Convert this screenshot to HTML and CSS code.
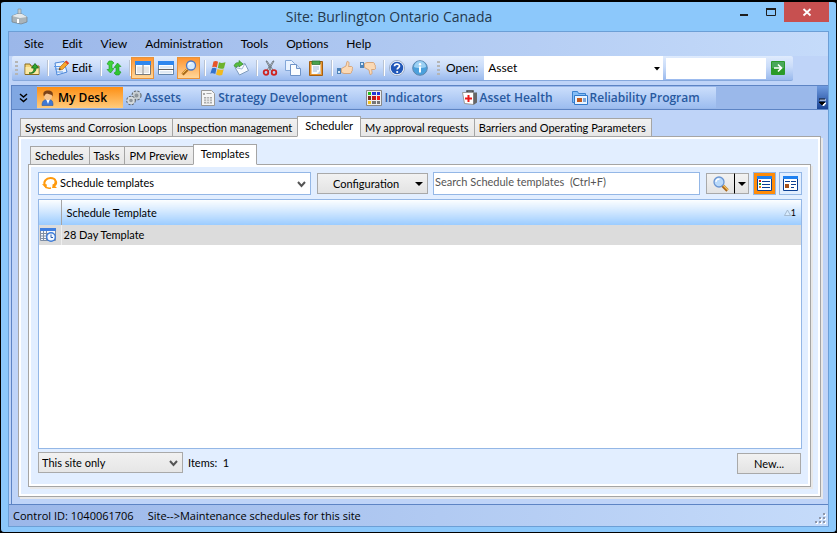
FILE: index.html
```html
<!DOCTYPE html>
<html lang="en">
<head>
<meta charset="utf-8">
<title>Site: Burlington Ontario Canada</title>
<link rel="stylesheet" href="styles.css">
</head>
<body>
<div class="window">
  <header class="titlebar">
    <svg class="app-icon" width="18" height="18" viewBox="0 0 18 18"><path d="M8 1h3v7H8z" fill="#c4cdd2" stroke="#7f8a90" stroke-width=".6"/><path d="M2 8l5-2h5l5 3v5l-6 2-9-2z" fill="#aab4b9" stroke="#758087" stroke-width=".7"/><path d="M2 8l5-2h5l5 3-7 1z" fill="#e4e9eb"/><path d="M7 11h2v4H7z" fill="#fff"/></svg>
    <h1 class="title">Site: Burlington Ontario Canada</h1>
    <div class="window-buttons">
      <button class="winbtn" aria-label="Minimize"><svg width="12" height="12" viewBox="0 0 12 12"><path d="M2 8h8v2H2z" fill="#1e1e1e"/></svg></button>
      <button class="winbtn" aria-label="Maximize"><svg width="12" height="12" viewBox="0 0 12 12"><path d="M1.500 2.500h9v7h-9z" fill="none" stroke="#1e1e1e"/><path d="M1 2h10v2H1z" fill="#1e1e1e"/></svg></button>
      <button class="winbtn close" aria-label="Close"><svg width="12" height="12" viewBox="0 0 12 12"><path d="M2.500 3l7 6.500M9.500 3l-7 6.500" stroke="#fff" stroke-width="1.800"/></svg></button>
    </div>
  </header>

  <div class="client">
    <nav class="menu" aria-label="Main menu">
      <button>Site</button><button>Edit</button><button>View</button><button>Administration</button><button>Tools</button><button>Options</button><button>Help</button>
    </nav>

    <div class="toolbar-row">
      <div class="toolbar">
        <span class="grip"></span>
        <button class="tool" aria-label="Up one level"><svg width="16" height="16" viewBox="0 0 16 16"><path d="M1 4h5l1 2h8v8.500H1z" fill="#f3d477" stroke="#8a6a1c"/><path d="M1.500 7h13v7h-13z" fill="#fbe9a6"/><path d="M5 13c4 0 5-2 5-5H7.500L11 3.500 14.500 8H12c0 4-3 6-7 5z" fill="#2fa52f" stroke="#136313" stroke-width=".8"/></svg></button>
        <span class="sep"></span>
        <button class="tool wide"><svg width="16" height="16" viewBox="0 0 16 16"><path d="M2 3l9-1.500 3 10.500-10 3z" fill="#e9f3ff" stroke="#4c86d8"/><path d="M1 6.500h6M2 9h6M3 12h7" stroke="#5b98e6"/><path d="M6 10l1-3 6-6 2.500 2.500-6 6z" fill="#f6a72c" stroke="#b86a10" stroke-width=".7"/><path d="M12 2l1.500-1.500 2.500 2.500L14.500 4.500z" fill="#e2402c"/><path d="M6 10l.7-2 1.300 1.300z" fill="#333"/></svg>Edit</button>
        <span class="sep"></span>
        <button class="tool" aria-label="Refresh"><svg width="16" height="16" viewBox="0 0 16 16"><path d="M1 4l2-3h3l2 2-2 1.500v4H8L4.500 13 1 9.500h2V5z" fill="#3fd43a" stroke="#1c9422" stroke-width=".6"/><path d="M15 12l-2 3h-3l-2-2 2-1.500v-4H8L11.500 3 15 6.500h-2V11z" fill="#2fc62f" stroke="#1c9422" stroke-width=".6"/></svg></button>
        <span class="sep"></span>
        <button class="tool on" aria-label="Split columns"><svg width="16" height="16" viewBox="0 0 16 16"><path d="M.5 1.500h15v13H.5z" fill="#fff" stroke="#777"/><path d="M0 1h16v4H0z" fill="#2f87ee"/><path d="M2 6.500h5v6.500H2zM9 6.500h5v6.500H9z" fill="#e6e6e6"/><path d="M8 5v9" stroke="#777"/></svg></button>
        <button class="tool" aria-label="Split rows"><svg width="16" height="16" viewBox="0 0 16 16"><path d="M.5 1.500h15v13H.5z" fill="#fff" stroke="#6285ad"/><path d="M0 1h16v4H0z" fill="#2f87ee"/><path d="M2 6h12v2.500H2zM2 11h12v2.500H2z" fill="#dfe9f4"/><path d="M0 9.500h16" stroke="#666"/></svg></button>
        <button class="tool on" aria-label="Find"><svg width="16" height="16" viewBox="0 0 16 16"><path d="M1.500 14.500l5-5" stroke="#a86a1b" stroke-width="3"/><path d="M1.500 13.500l5-5" stroke="#f4bf57"/><circle cx="10" cy="5.500" r="4.500" fill="#d5eaff" stroke="#4c78c4" stroke-width="1.300"/><path d="M7.500 5c.3-1.500 1.500-2.200 3-2" stroke="#fff" stroke-width="1.300" fill="none"/></svg></button>
        <span class="sep"></span>
        <button class="tool" aria-label="Windows"><svg width="16" height="16" viewBox="0 0 16 16"><path d="M3.500 1.500c2-1 3.500-.5 4.500.3L6.800 7.500c-1.800-1-3.300-1-4.600-.3z" fill="#e6552a"/><path d="M9 2.200c2 1 3.500.8 6.500 0l-1.500 6c-2 .8-3.800.6-6.200-.3z" fill="#6eb32c"/><path d="M2 8.300c1.500-.8 3-.7 4.500.2L5.300 14c-1.600-.8-3.200-.9-5-.2z" fill="#3472cc"/><path d="M7.500 9c2 1 3.900 1 6.200.2L12.200 15c-2 .8-3.900.5-6.200-.4z" fill="#f1b920"/></svg></button>
        <button class="tool" aria-label="Send"><svg width="16" height="16" viewBox="0 0 16 16"><path d="M2 7.500l10-4 3.500 7-9 4.500z" fill="#f8fbff" stroke="#7f9bbd"/><path d="M2 7.500l7 1.500L12 3.500" fill="none" stroke="#a3b8d2"/><path d="M1 6c1-3 3-4 5-3V.5L10 4 6 7V5.500C5 5 4 6 3.500 7.500z" fill="#58bd3c" stroke="#2d8420" stroke-width=".6"/></svg></button>
        <span class="sep"></span>
        <button class="tool" aria-label="Cut"><svg width="16" height="16" viewBox="0 0 16 16"><path d="M4 1l1 0 6 9-1.500 1zM12 1h-1L5 10l1.500 1z" fill="#dce2e8" stroke="#5d6872" stroke-width=".8"/><circle cx="4" cy="12.500" r="2.300" fill="none" stroke="#cf2421" stroke-width="1.800"/><circle cx="12" cy="12.500" r="2.300" fill="none" stroke="#cf2421" stroke-width="1.800"/></svg></button>
        <button class="tool" aria-label="Copy"><svg width="16" height="16" viewBox="0 0 16 16"><path d="M.5.500h6l3 3v7h-9z" fill="#eaf3ff" stroke="#83a7d8"/><path d="M5.500 4.500h6l4 4v7h-10z" fill="#fbfdff" stroke="#6e93c8"/><path d="M11.500 4.500v4h4" fill="#cfe1f8" stroke="#6e93c8"/></svg></button>
        <button class="tool" aria-label="Paste"><svg width="16" height="16" viewBox="0 0 16 16"><path d="M1.500 1.500h13v14h-13z" fill="#e99630" stroke="#a55f13"/><path d="M3.500 4h9v10h-9z" fill="#f7fbff"/><path d="M4 1h8v3.500H4z" fill="#48a14c" stroke="#266b2b" stroke-width=".7"/><path d="M5 7h6M5 9h6M5 11h4" stroke="#9fb9d9"/><path d="M9 14l3.500-3.500V14z" fill="#bcd0e8"/></svg></button>
        <span class="sep"></span>
        <button class="tool" aria-label="Approve"><svg width="16" height="16" viewBox="0 0 16 16"><path d="M0 8h4v6H0z" fill="#4e83b8"/><path d="M1 11h2v2H1z" fill="#d7e8f8"/><path d="M4.500 8.500L9 6l1-4.500c2-.5 2.500 1.500 1.500 5h3c1.500.5 1.300 2 .5 2.500.7.800.5 2-.4 2.300.2 1-.3 2-1.600 2.200H7l-2.500-1z" fill="#fbd9b5" stroke="#d39b68" stroke-width=".8"/></svg></button>
        <button class="tool" aria-label="Reject"><svg width="16" height="16" viewBox="0 0 16 16"><path d="M0 2h4v6H0z" fill="#4e83b8"/><path d="M1 3h2v2H1z" fill="#d7e8f8"/><path d="M4.500 7.500L9 10l1 4.500c2 .5 2.500-1.500 1.500-5h3c1.500-.5 1.300-2 .5-2.500.7-.8.5-2-.4-2.300.2-1-.3-2-1.600-2.200H7l-2.500 1z" fill="#fbd9b5" stroke="#d39b68" stroke-width=".8"/></svg></button>
        <span class="sep"></span>
        <button class="tool" aria-label="Help"><svg width="16" height="16" viewBox="0 0 16 16"><circle cx="8" cy="8" r="7" fill="#2157b8" stroke="#eef4fc" stroke-width="1.500"/><circle cx="8" cy="8" r="7.600" fill="none" stroke="#7288aa" stroke-width=".6"/><path d="M5.500 6.300C5.500 3.500 10.500 3.500 10.500 6c0 1.700-2.300 1.800-2.300 3.500" fill="none" stroke="#fff" stroke-width="1.700"/><circle cx="8.200" cy="12" r="1.100" fill="#fff"/></svg></button>
        <button class="tool" aria-label="Information"><svg width="16" height="16" viewBox="0 0 16 16"><circle cx="8" cy="8" r="7.300" fill="#4ba0dc" stroke="#5f87ac"/><path d="M2 7a6 6 0 0 1 12 0c-3 1.500-9 1.500-12 0z" fill="#9bd0f3"/><circle cx="8" cy="4.200" r="1.200" fill="#fff"/><path d="M8 6.500v6" stroke="#fff" stroke-width="2"/></svg></button>
        <span class="grip second"></span>
        <label class="open-label" for="open-type">Open:</label>
        <span class="open-combo">
          <select id="open-type"><option>Asset</option></select>
          <svg class="tri" width="7" height="4" viewBox="0 0 7 4"><path d="M0 0h6L3 3.500z"/></svg>
        </span>
        <input class="open-text" type="text" aria-label="Open item">
        <button class="tool go" aria-label="Go"><svg width="14" height="14" viewBox="0 0 14 14"><rect width="14" height="14" rx="1" fill="#2a9a28"/><path d="M1 1h12v6H1z" fill="#4aa85a"/><path d="M3 7h7M7 3.500L10.500 7 7 10.500" fill="none" stroke="#fff" stroke-width="1.700"/></svg></button>
      </div>
    </div>

    <nav class="navbar" aria-label="Modules">
      <button class="more" aria-label="Collapse"><svg width="9" height="10" viewBox="0 0 9 10"><path d="M1 1l3.500 3L8 1M1 5.500l3.500 3 3.500-3" fill="none" stroke="#000" stroke-width="1.500"/></svg></button>
      <a class="nav-item current" href="#"><svg width="16" height="16" viewBox="0 0 16 16"><path d="M2 15.500C2 11 4 9.500 8 9.500s5 1.500 5 6z" fill="#3f78d4" stroke="#2b56a0" stroke-width=".6"/><path d="M6 9h4l-2 5z" fill="#fff"/><circle cx="8" cy="6" r="4" fill="#f6c592"/><path d="M4 6.500C2 2 5 .5 8 .5s6 1.500 4.500 6C12 4 9 4.500 7 3.500 5 4 5 5 4 6.500z" fill="#7c4217"/></svg>My Desk</a>
      <a class="nav-item" href="#"><svg width="16" height="16" viewBox="0 0 16 16"><circle cx="10.500" cy="5.500" r="3.500" fill="#dfe3e6" stroke="#5c646b" stroke-width="3.200" stroke-dasharray="1.800 1"/><circle cx="10.500" cy="5.500" r="3" fill="#8d959b" stroke="#c8ced2" stroke-width="2"/><circle cx="5" cy="10.500" r="3.300" fill="#dfe3e6" stroke="#5c646b" stroke-width="3" stroke-dasharray="1.700 1"/><circle cx="5" cy="10.500" r="2.800" fill="#8d959b" stroke="#d5dadd" stroke-width="2"/></svg>Assets</a>
      <a class="nav-item" href="#"><svg width="16" height="16" viewBox="0 0 16 16"><path d="M1.500.500h10l3 3v12h-13z" fill="#f6f6f6" stroke="#999"/><path d="M3 3h2v2H3zM4 7h8v6.500H4z" fill="#aaa"/><path d="M4 9h8M4 11.300h8M6.700 7v6.500M9.400 7v6.500" stroke="#eee"/><path d="M6.500 3.500h5" stroke="#aaa"/></svg>Strategy Development</a>
      <a class="nav-item" href="#"><svg width="16" height="16" viewBox="0 0 16 16"><path d="M.5.500h15v15H.5z" fill="#eee" stroke="#888"/><path d="M2 2h3v3H2z" fill="#20c020"/><path d="M6 2h4v3H6zM11 2h3v3h-3z" fill="#2038d8"/><path d="M2 6h3v4H2z" fill="#7c2c20"/><path d="M6 6h4v4H6z" fill="#c01818"/><path d="M11 6h3v4h-3z" fill="#f01818"/><path d="M2 11h3v3H2z" fill="#f0c020"/><path d="M6 11h4v3H6zM11 11h3v3h-3z" fill="#777"/></svg>Indicators</a>
      <a class="nav-item" href="#"><svg width="16" height="16" viewBox="0 0 16 16"><path d="M5 3V1h6v2" fill="none" stroke="#444" stroke-width="1.500"/><path d="M.5 2.500h11v12l-9-1z" fill="#fff" stroke="#999"/><path d="M11.500 2.500h3.500v10l-3.500 2.500z" fill="#666"/><path d="M6.500 5v7M3 8.500h7" stroke="#ec1818" stroke-width="2"/></svg>Asset Health</a>
      <a class="nav-item" href="#"><svg width="16" height="16" viewBox="0 0 16 16"><path d="M.5 12.500v-11h5l1 2h7v9z" fill="#85bdf5" stroke="#3b82d0"/><path d="M2.500 14.500v-9h13v9z" fill="#eaf4ff" stroke="#2f79cc"/><path d="M5 8h5v4H5z" fill="#c25a1e"/><path d="M11 8h3v4h-3z" fill="#7ca6d8"/></svg>Reliability Program</a>
      <button class="overflow" aria-label="More modules"><svg width="7" height="8" viewBox="0 0 7 8"><path d="M1 2h6M2 5h5L4.500 8z" fill="#fff" stroke="#fff"/><path d="M0 1h6M0 4h6L3 7z" stroke="#000" stroke-width=".8"/></svg></button>
    </nav>

    <main class="workspace">
      <div class="tabs" role="tablist">
        <button class="tab" role="tab">Systems and Corrosion Loops</button><button class="tab" role="tab">Inspection management</button><button class="tab active" role="tab" aria-selected="true">Scheduler</button><button class="tab" role="tab">My approval requests</button><button class="tab" role="tab">Barriers and Operating Parameters</button>
      </div>
      <section class="panel outer">
        <div class="tabs" role="tablist">
          <button class="tab" role="tab">Schedules</button><button class="tab" role="tab">Tasks</button><button class="tab" role="tab">PM Preview</button><button class="tab active" role="tab" aria-selected="true">Templates</button>
        </div>
        <section class="panel inner">
          <div class="filters">
            <span class="view-combo">
              <svg class="view-icon" width="16" height="14" viewBox="0 0 16 14"><path d="M3 9.500C1 6 4 2 8.500 2 11 2 13 3 13.500 5" fill="none" stroke="#ff9a0c" stroke-width="2"/><path d="M13.500 5c.8 2-.3 4-2.500 5" fill="none" stroke="#ff9a0c" stroke-width="2.600"/><path d="M3 10c1 2 3.500 2.500 6 2" fill="none" stroke="#ff9a0c" stroke-width="1.600"/><path d="M0 8l5 .5-1 4zM11 8l4 4h-5z" fill="#ff9a0c"/></svg>
              <select aria-label="View"><option>Schedule templates</option></select>
              <svg class="chev" width="9" height="7" viewBox="0 0 9 7"><path d="M1 1l3.500 4L8 1" fill="none" stroke="#555" stroke-width="2"/></svg>
            </span>
            <button class="btn config"><span>Configuration</span><svg width="8" height="4" viewBox="0 0 8 4"><path d="M0 0h8L4 4z"/></svg></button>
            <input class="search" type="text" aria-label="Search" placeholder="Search Schedule templates &nbsp;(Ctrl+F)">
            <span class="split">
              <button class="btn find" aria-label="Search"><svg width="16" height="16" viewBox="0 0 16 16"><path d="M9.500 9.500l5 5" stroke="#a8661a" stroke-width="3.200"/><path d="M10 9l5 5" stroke="#f5c25a" stroke-width="1.300"/><circle cx="6" cy="6" r="5" fill="#b9d9fa" stroke="#6b95d2" stroke-width="1.300"/><path d="M3 6c0-2 1.500-3 3.500-3" stroke="#fff" stroke-width="1.300" fill="none"/></svg></button><button class="btn drop" aria-label="Search options"><svg width="8" height="4" viewBox="0 0 8 4"><path d="M0 0h8L4 4z"/></svg></button>
            </span>
            <button class="view on" aria-label="List view"><svg width="15" height="15" viewBox="0 0 15 15"><path d="M.5.500h14v14H.5z" fill="#fff" stroke="#0b3f94"/><path d="M0 0h15v3H0z" fill="#1f80f0"/><path d="M2 4h2v2H2z" fill="#d01818"/><path d="M2 7h2v2H2z" fill="#20a020"/><path d="M2 10h2v2H2z" fill="#f08020"/><path d="M5 5.500h8M5 8.500h8M5 11.500h8" stroke="#0b3f94"/></svg></button>
            <button class="view" aria-label="Card view"><svg width="15" height="15" viewBox="0 0 15 15"><path d="M.5.500h14v14H.5z" fill="#fff" stroke="#0b3f94"/><path d="M0 0h15v3H0z" fill="#1f80f0"/><path d="M2 5.500h5M8 5.500h5M8 8.500h5M8 11.500h3" stroke="#0b3f94"/><path d="M2 8h4v4H2z" fill="#a5501a"/></svg></button>
          </div>

          <div class="grid">
            <table>
              <thead><tr><th class="icon-col"></th><th><span class="head">Schedule Template<span class="sort"><svg width="7" height="7" viewBox="0 0 7 7"><path d="M.5 6.500L3.500 1l3 5.500z" fill="#d8ecff" stroke="#9cb0c4" stroke-width=".8"/></svg>1</span></span></th></tr></thead>
              <tbody><tr><td class="icon-col"><svg width="16" height="14" viewBox="0 0 16 14"><path d="M.5.500h15v12H.5z" fill="#f4f7fb" stroke="#7f8ea3"/><path d="M0 0h16v3H0z" fill="#3f7fe0"/><path d="M0 5.500h9M0 8h8M0 10.500h8M3.500 3v10M6.500 3v10" stroke="#7f8ea3"/><circle cx="11" cy="9" r="4.300" fill="#f2f8ff" stroke="#3b7ad8" stroke-width="1.400"/><path d="M11 6.500V9.500h2" fill="none" stroke="#2d5fae"/></svg></td><td>28 Day Template</td></tr></tbody>
            </table>
          </div>

          <div class="bottom">
            <span class="site-combo">
              <select aria-label="Scope"><option>This site only</option></select>
              <svg class="chev" width="9" height="7" viewBox="0 0 9 7"><path d="M1 1l3.500 4L8 1" fill="none" stroke="#555" stroke-width="2"/></svg>
            </span>
            <span class="count">Items: &nbsp;1</span>
            <button class="btn new">New...</button>
          </div>
        </section>
      </section>
    </main>

    <footer class="status">
      <span>Control ID: 1040061706</span><span>Site--&gt;Maintenance schedules for this site</span>
      <svg class="resize" width="11" height="11" viewBox="0 0 11 11"><path d="M9 1h2v2H9zM5 5h2v2H5zM9 5h2v2H9zM1 9h2v2H1zM5 9h2v2H5zM9 9h2v2H9z" fill="#fff"/><path d="M8 0h2v2H8zM4 4h2v2H4zM8 4h2v2H8zM0 8h2v2H0zM4 8h2v2H4zM8 8h2v2H8z" fill="#8d97ab"/></svg>
    </footer>
  </div>
</div>
</body>
</html>
```

FILE: styles.css
```css
* { box-sizing: border-box; }

body {
  margin: 0;
  background: #000;
  color: #000;
  font: 11px/14px Lato, sans-serif;
}

button, input, select { font: inherit; color: inherit; margin: 0; padding: 0; border: 0; border-radius: 0; background: none; }
select { appearance: none; width: 100%; height: 100%; }
svg { display: block; flex: none; }
a { color: inherit; text-decoration: none; }

.window {
  min-height: 100vh;
  display: flex;
  flex-direction: column;
  padding: 0 7px 5px;
  border: 1px solid #000;
  border-top-width: 2px;
  border-radius: 4px;
  background: #8cc8fb;
}

.titlebar { display: flex; height: 29px; }
.app-icon { margin: 6px 0 0 2px; }
.title { flex: 1; margin: 0; padding-left: 20px; font: 14px/29px "Open Sans", sans-serif; color: #25394d; text-align: center; }
.window-buttons { display: flex; justify-content: flex-end; align-items: flex-start; }
.winbtn { display: flex; align-items: center; justify-content: center; width: 27px; height: 20px; }
.winbtn.close { width: 45px; background: #c75050; }

.client {
  flex: 1;
  display: flex;
  flex-direction: column;
  border: 1px solid #6c9fd6;
  background: #bfd4f8;
}

.menu {
  display: flex;
  height: 24px;
  padding-left: 6px;
  background: linear-gradient(90deg, #9bb7e9, #c5dbfa);
  font: 12px/24px Lato, sans-serif;
}
.menu button { padding: 0 9px; }

.toolbar-row { padding: 0 35px 0 3px; }
.toolbar {
  display: flex;
  align-items: center;
  height: 25px;
  border-radius: 2px;
  border-bottom: 1px solid #86a8dc;
  background: linear-gradient(#dfebfd, #cadcf9 45%, #9abaee);
  font: 12px/24px Lato, sans-serif;
}
.grip { width: 3px; height: 14px; margin: 0 2px 0 3px; background: repeating-linear-gradient(#b5b5b5 0 2px, transparent 2px 4px); }
.grip.second { margin: 0 6px; }
.sep { width: 6px; height: 16px; background: linear-gradient(90deg, transparent 4px, #b9c3d3 4px 5px, #fff 5px); }
.tool { display: flex; align-items: center; justify-content: center; width: 23px; height: 22px; }
.tool.wide { width: 47px; gap: 3px; }
.tool.on { border: 1px solid #e8923a; background: linear-gradient(#ff9531, #ffd79a); }
.open-label { margin-right: 6px; }
.open-combo { position: relative; flex: 1; height: 24px; background: #fff; }
.open-combo select { padding-left: 4px; }
.tri { position: absolute; right: 2px; top: 11px; }
.open-text { width: 100px; height: 21px; margin-left: 3px; background: #fff; }
.go { width: 27px; padding-right: 3px; }

.navbar {
  display: flex;
  height: 25px;
  margin: 4px 0 0 2px;
  border: 1px solid #5d84c4;
  border-right: 0;
  background: #9ab8ea;
  font: 600 12px/22px "Open Sans", sans-serif;
  color: #27599f;
}
.more { width: 25px; padding-left: 7px; background: #80a7e2; }
.nav-item {
  display: flex;
  align-items: center;
  gap: 2px;
  height: 21px;
  margin-top: 1px;
  padding: 0 16px 0 3px;
  background: linear-gradient(#cbdefb, #9dbdf0);
}
.nav-item.current { background: linear-gradient(#fd8f14, #ffcb7c); color: #000; }
.overflow { display: flex; align-items: flex-end; width: 11px; margin-left: auto; padding: 0 0 3px 2px; background: linear-gradient(#6f9be0, #1b4596); }

.workspace {
  flex: 1;
  display: flex;
  flex-direction: column;
  margin-left: 2px;
  padding: 6px 7px 7px 6px;
  border-left: 1px solid #5d84c4;
}

.tabs { display: flex; align-items: flex-end; height: 21px; margin: 0 0 -1px 2px; }
.tab {
  position: relative;
  height: 19px;
  margin-right: -1px;
  padding: 0 5px 0 4px;
  border: 1px solid #a5a5a5;
  background: linear-gradient(#f1f1f1, #e6e6e6);
  white-space: nowrap;
}
.tab.active { height: 21px; padding: 0 7px 2px; border-bottom-color: #fff; background: #fff; }

.panel {
  flex: 1;
  display: flex;
  flex-direction: column;
  border: 1px solid #a5a5a5;
  box-shadow: inset 0 0 0 2px #fff, 2px 2px 0 #e8e8e8;
  background: #e2eeff;
}
.outer { padding: 7px 9px 9px; }
.inner { padding: 7px 8px 12px 9px; }

.filters { display: flex; align-items: center; height: 23px; margin-bottom: 4px; }
.view-combo { position: relative; flex: 1 0 273px; height: 23px; border: 1px solid #94b7e6; background: #fff; }
.view-combo select { padding: 0 20px 2px 21px; }
.view-icon { position: absolute; left: 3px; top: 3px; }
.chev { position: absolute; right: 4px; top: 8px; pointer-events: none; }
.btn { border: 1px solid #a9a9a9; background: linear-gradient(#f2f2f2, #e3e3e3); }
.config { display: flex; align-items: center; width: 111px; height: 21px; margin: 0 5px 0 6px; padding: 0 4px 0 15px; justify-content: space-between; }
.search { flex: 1 0 267px; height: 23px; padding: 0 0 4px 1px; border: 1px solid #94b7e6; background: #fff; }
.search::placeholder { color: #555; opacity: 1; }
.split { display: flex; margin: 0 4px 0 6px; }
.find { width: 29px; height: 21px; padding-left: 6px; border-right: 1px solid #000; }
.drop { display: flex; align-items: center; justify-content: center; width: 14px; height: 21px; border-left: 0; }
.view { display: flex; align-items: center; justify-content: center; width: 23px; height: 23px; border: 1px solid #94b7e6; }
.view.on { margin-right: 3px; background: #ff8c0a; }

.grid { flex: 1; border: 1px solid #94b7e6; background: #fff; }
.grid table { width: 100%; border-collapse: collapse; }
.grid th { height: 25px; padding: 0 5px; background: linear-gradient(#fcfeff, #d3e8ff 45%, #9bccff); font-weight: normal; text-align: left; }
.grid th.icon-col { width: 22px; padding: 0; border-right: 1px solid #a5a5a5; }
.grid td { height: 20px; padding: 0 2px; background: #dcdcdc; }
.grid td.icon-col { padding: 0 1px; border-right: 1px solid #eee; }
.head { display: flex; justify-content: space-between; }
.sort { display: flex; align-items: center; font-size: 9px; }

.bottom { display: flex; align-items: flex-start; margin-top: 3px; }
.site-combo { position: relative; width: 145px; height: 21px; border: 1px solid #a9a9a9; background: linear-gradient(#f1f1f1, #e6e6e6); }
.site-combo select { padding-left: 3px; }
.site-combo .chev { top: 7px; }
.count { margin-left: 5px; line-height: 22px; }
.new { width: 64px; height: 21px; margin: 1px 1px 0 auto; }

.status {
  position: relative;
  display: flex;
  gap: 14px;
  height: 22px;
  padding-left: 4px;
  border-top: 1px solid #5d84c4;
  background: linear-gradient(90deg, #9bb7e9, #c5dbfa);
  font: 11px/22px "Open Sans", sans-serif;
}
.resize { position: absolute; right: 2px; bottom: 2px; }
```
